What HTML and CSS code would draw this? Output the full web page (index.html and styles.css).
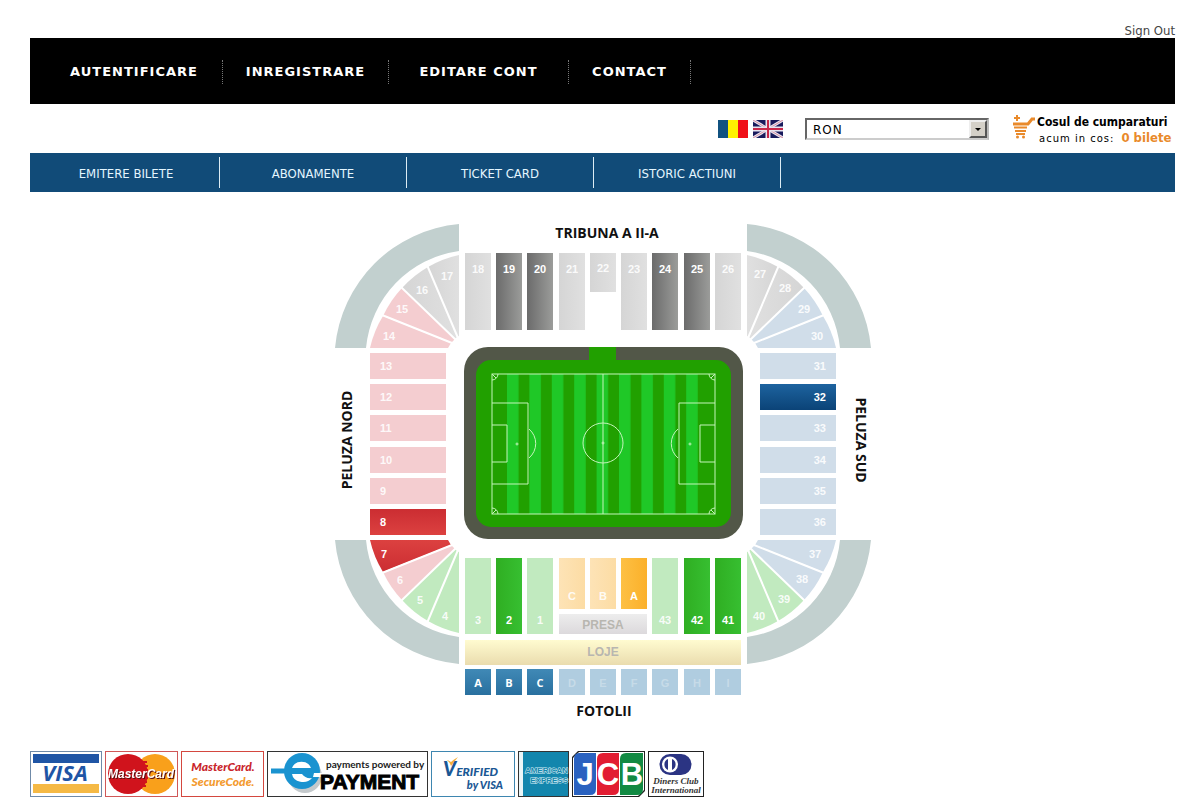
FILE: index.html
```html
<!DOCTYPE html>
<html lang="ro">
<head>
    <meta charset="UTF-8">
    <title>Bilete</title>
    <meta name="viewport" content="width=device-width, initial-scale=1.0">
    <link rel="stylesheet" href="styles.css">
</head>
<body>
    <div class="page">
        <div class="account-bar">
            <a href="#">Sign Out</a>
        </div>

        <nav class="main-nav">
            <a class="nav-first" href="#">AUTENTIFICARE</a>
            <a class="nav-medium" href="#">INREGISTRARE</a>
            <a class="nav-wide" href="#">EDITARE CONT</a>
            <a class="nav-small" href="#">CONTACT</a>
        </nav>

        <div class="tools">
            <div class="languages">
                <a href="#" aria-label="Romana">
                    <svg width="30" height="18" viewBox="0 0 30 18">
                        <rect width="10" height="18" fill="#115280"/>
                        <rect x="10" width="10" height="18" fill="#fff200"/>
                        <rect x="20" width="10" height="18" fill="#f01018"/>
                    </svg>
                </a>
                <a href="#" aria-label="English">
                    <svg width="30" height="18" viewBox="0 0 30 18">
                        <rect width="30" height="18" fill="#191a5c"/>
                        <path d="M0 0L30 18M30 0L0 18" stroke="#e8e4f0" stroke-width="3"/>
                        <path d="M0 0L30 18M30 0L0 18" stroke="#c73a55" stroke-width="0.500"/>
                        <path d="M15 0V18M0 9H30" stroke="#e8e4f0" stroke-width="5"/>
                        <path d="M15 0V18M0 9H30" stroke="#c8284a" stroke-width="2"/>
                    </svg>
                </a>
            </div>
            <div class="currency">
                <select aria-label="Moneda">
                    <option>RON</option>
                    <option>EUR</option>
                </select>
                <span class="currency-arrow"></span>
            </div>
            <a class="cart" href="#">
                <svg width="24" height="24" viewBox="0 0 24 24">
                    <path d="M5 0V6M2 3H8" stroke="#e98a2b" stroke-width="2"/>
                    <path d="M23 4H20L16 9H1" fill="none" stroke="#e98a2b" stroke-width="3"/>
                    <path d="M2 12.500H15M3 16H14M4 19H13" stroke="#e98a2b" stroke-width="2"/>
                    <circle cx="5.500" cy="22" r="1.500" fill="#e98a2b"/>
                    <circle cx="11.500" cy="22" r="1.500" fill="#e98a2b"/>
                </svg>
                <span class="cart-text">
                    <strong>Cosul de cumparaturi</strong>
                    <span class="cart-line"><span class="cart-label">acum in cos:</span><b>0 bilete</b></span>
                </span>
            </a>
        </div>

        <nav class="sub-nav">
            <a href="#">EMITERE BILETE</a>
            <a href="#">ABONAMENTE</a>
            <a href="#">TICKET CARD</a>
            <a href="#">ISTORIC ACTIUNI</a>
        </nav>

        <main class="stadium">
            <svg class="map" width="536" height="496" viewBox="0 0 536 496">
                <defs>
                    <linearGradient id="darkGray"><stop offset="0" stop-color="#6b6b6b"/><stop offset="1" stop-color="#9b9c9a"/></linearGradient>
                    <linearGradient id="lightGray"><stop offset="0" stop-color="#d5d5d5"/><stop offset="1" stop-color="#e0e0e0"/></linearGradient>
                    <linearGradient id="green"><stop offset="0" stop-color="#2fae22"/><stop offset="1" stop-color="#37bf31"/></linearGradient>
                    <linearGradient id="gold"><stop offset="0" stop-color="#fdc044"/><stop offset="1" stop-color="#fbb02a"/></linearGradient>
                    <linearGradient id="lightGold"><stop offset="0" stop-color="#fde3b6"/><stop offset="1" stop-color="#fcdca4"/></linearGradient>
                    <linearGradient id="red" x2="0" y2="1"><stop offset="0" stop-color="#cb2d32"/><stop offset="1" stop-color="#dc4140"/></linearGradient>
                    <linearGradient id="blue" x2="0" y2="1"><stop offset="0" stop-color="#1d639f"/><stop offset="1" stop-color="#0b4377"/></linearGradient>
                    <linearGradient id="seat" x2="0" y2="1"><stop offset="0" stop-color="#4089b6"/><stop offset="1" stop-color="#29709f"/></linearGradient>
                    <linearGradient id="lodge" x2="0" y2="1"><stop offset="0" stop-color="#fffbd0"/><stop offset="1" stop-color="#eadcae"/></linearGradient>
                    <linearGradient id="press" x2="0" y2="1"><stop offset="0" stop-color="#ededed"/><stop offset="1" stop-color="#dcd9dc"/></linearGradient>
                    <pattern id="grass" x="172" width="22.400" height="142" patternUnits="userSpaceOnUse">
                        <rect width="22.400" height="142" fill="#21a000"/>
                        <rect width="11.500" height="142" fill="#1fc827"/>
                    </pattern>
                    <path id="ring" d="M0 124A137 137 0 0 1 124 0V27A108 108 0 0 0 31 124Z"/>
                    <path id="wedgeA" d="M35 124A106 106 0 0 1 48 92L116 119L113 124Z"/>
                    <path id="wedgeB" d="M48 92A106 106 0 0 1 67 64L120 115L116 119Z"/>
                    <path id="wedgeC" d="M67 64A106 106 0 0 1 93 43L122 113L120 115Z"/>
                    <path id="wedgeD" d="M93 43A106 106 0 0 1 124 31V112L122 113Z"/>
                    <path id="gaps" d="M47 91L117 119M66 63L121 116M92 41L123 114"/>
                    <g id="half">
                        <path d="M157 179H193V260H157M157 201H172V238H157M194 205A19 19 0 0 1 194 234M157 156A6 6 0 0 0 163 150M157 284A6 6 0 0 1 163 290M157 150L161 154M157 290L161 286"/>
                        <circle cx="182" cy="220" r="1"/>
                    </g>
                </defs>

                <!-- corners -->
                <g>
                    <use href="#ring" class="ring"/>
                    <use href="#wedgeA" class="pink"/>
                    <use href="#wedgeB" class="pink"/>
                    <use href="#wedgeC" class="gray"/>
                    <use href="#wedgeD" class="gray"/>
                    <use href="#gaps" class="gap"/>
                </g>
                <g transform="matrix(-1 0 0 1 536 0)">
                    <use href="#ring" class="ring"/>
                    <use href="#wedgeA" class="sky"/>
                    <use href="#wedgeB" class="sky"/>
                    <use href="#wedgeC" class="gray"/>
                    <use href="#wedgeD" class="gray"/>
                    <use href="#gaps" class="gap"/>
                </g>
                <g transform="matrix(1 0 0 -1 0 440)">
                    <use href="#ring" class="ring"/>
                    <use href="#wedgeA" class="red"/>
                    <use href="#wedgeB" class="pink"/>
                    <use href="#wedgeC" class="mint"/>
                    <use href="#wedgeD" class="mint"/>
                    <use href="#gaps" class="gap"/>
                </g>
                <g transform="matrix(-1 0 0 -1 536 440)">
                    <use href="#ring" class="ring"/>
                    <use href="#wedgeA" class="sky"/>
                    <use href="#wedgeB" class="sky"/>
                    <use href="#wedgeC" class="mint"/>
                    <use href="#wedgeD" class="mint"/>
                    <use href="#gaps" class="gap"/>
                </g>
                <g class="num off">
                    <text x="54" y="116">14</text><text x="67" y="89">15</text><text x="87" y="70">16</text><text x="112" y="56">17</text>
                    <text x="425" y="54">27</text><text x="450" y="68">28</text><text x="469" y="89">29</text><text x="482" y="116">30</text>
                    <text x="65" y="360">6</text><text x="85" y="380">5</text><text x="110" y="396">4</text>
                    <text x="480" y="334">37</text><text x="467" y="359">38</text><text x="449" y="379">39</text><text x="424" y="396">40</text>
                </g>
                <text class="num" x="49" y="334">7</text>

                <!-- tribuna II -->
                <g class="gray">
                    <rect x="130" y="29" width="26" height="77"/>
                    <rect x="224" y="29" width="26" height="77"/>
                    <rect x="255" y="29" width="26" height="39"/>
                    <rect x="286" y="29" width="26" height="77"/>
                    <rect x="380" y="29" width="26" height="77"/>
                </g>
                <g class="dark">
                    <rect x="161" y="29" width="26" height="77"/>
                    <rect x="192" y="29" width="26" height="77"/>
                    <rect x="317" y="29" width="26" height="77"/>
                    <rect x="349" y="29" width="26" height="77"/>
                </g>
                <g class="num off">
                    <text x="143" y="49">18</text><text x="237" y="49">21</text><text x="268" y="48">22</text><text x="299" y="49">23</text><text x="393" y="49">26</text>
                </g>
                <g class="num">
                    <text x="174" y="49">19</text><text x="205" y="49">20</text><text x="330" y="49">24</text><text x="362" y="49">25</text>
                </g>

                <!-- peluza nord -->
                <g class="pink">
                    <rect x="35" y="129" width="76" height="26"/>
                    <rect x="35" y="160" width="76" height="26"/>
                    <rect x="35" y="191" width="76" height="26"/>
                    <rect x="35" y="223" width="76" height="26"/>
                    <rect x="35" y="254" width="76" height="26"/>
                </g>
                <rect class="red" x="35" y="285" width="76" height="26"/>
                <g class="num left off">
                    <text x="45" y="146">13</text><text x="45" y="177">12</text><text x="45" y="208">11</text><text x="45" y="240">10</text><text x="45" y="271">9</text>
                </g>
                <text class="num left" x="45" y="302">8</text>

                <!-- peluza sud -->
                <g class="sky">
                    <rect x="425" y="129" width="76" height="26"/>
                    <rect x="425" y="191" width="76" height="26"/>
                    <rect x="425" y="223" width="76" height="26"/>
                    <rect x="425" y="254" width="76" height="26"/>
                    <rect x="425" y="285" width="76" height="26"/>
                </g>
                <rect class="blue" x="425" y="160" width="76" height="26"/>
                <g class="num right off">
                    <text x="491" y="146">31</text><text x="491" y="208">33</text><text x="491" y="240">34</text><text x="491" y="271">35</text><text x="491" y="302">36</text>
                </g>
                <text class="num right" x="491" y="177">32</text>

                <!-- tribuna I -->
                <g class="mint">
                    <rect x="130" y="334" width="26" height="76"/>
                    <rect x="192" y="334" width="26" height="76"/>
                    <rect x="317" y="334" width="26" height="76"/>
                </g>
                <g class="green">
                    <rect x="161" y="334" width="26" height="76"/>
                    <rect x="349" y="334" width="26" height="76"/>
                    <rect x="380" y="334" width="26" height="76"/>
                </g>
                <g class="cream">
                    <rect x="224" y="334" width="26" height="51"/>
                    <rect x="255" y="334" width="26" height="51"/>
                </g>
                <rect class="gold" x="286" y="334" width="26" height="51"/>
                <g class="num off">
                    <text x="143" y="400">3</text><text x="205" y="400">1</text><text x="330" y="400">43</text>
                    <text x="237" y="376">C</text><text x="268" y="376">B</text>
                </g>
                <g class="num">
                    <text x="174" y="400">2</text><text x="362" y="400">42</text><text x="393" y="400">41</text><text x="299" y="376">A</text>
                </g>
                <rect x="224" y="390" width="88" height="20" fill="url(#press)"/>
                <text class="area" x="268" y="405">PRESA</text>
                <rect x="130" y="416" width="276" height="25" fill="url(#lodge)"/>
                <text class="area" x="268" y="432">LOJE</text>

                <!-- fotolii -->
                <g class="seat">
                    <rect x="130" y="445" width="26" height="26"/>
                    <rect x="161" y="445" width="26" height="26"/>
                    <rect x="192" y="445" width="26" height="26"/>
                </g>
                <g class="seat-off">
                    <rect x="224" y="445" width="26" height="26"/>
                    <rect x="255" y="445" width="26" height="26"/>
                    <rect x="286" y="445" width="26" height="26"/>
                    <rect x="317" y="445" width="26" height="26"/>
                    <rect x="349" y="445" width="26" height="26"/>
                    <rect x="380" y="445" width="26" height="26"/>
                </g>
                <g class="num letters">
                    <text x="143" y="463">A</text><text x="174" y="463">B</text><text x="205" y="463">C</text>
                </g>
                <g class="num faint">
                    <text x="237" y="463">D</text><text x="268" y="463">E</text><text x="299" y="463">F</text><text x="330" y="463">G</text><text x="362" y="463">H</text><text x="393" y="463">I</text>
                </g>

                <!-- pitch -->
                <rect x="129" y="123" width="279" height="192" rx="24" fill="#525748"/>
                <rect x="141" y="136" width="255" height="167" rx="15" fill="#21a000"/>
                <rect x="254" y="123" width="27" height="14" fill="#21a000"/>
                <rect x="172" y="150" width="192" height="140" fill="url(#grass)"/>
                <g class="lines">
                    <rect x="157" y="150" width="223" height="140"/>
                    <path d="M268 150V290"/>
                    <circle cx="268" cy="219" r="20"/>
                    <circle cx="268" cy="219" r="1"/>
                    <use href="#half"/>
                    <use href="#half" transform="matrix(-1 0 0 1 537 0)"/>
                </g>

                <g class="stand-name">
                    <text x="272" y="14">TRIBUNA A II-A</text>
                    <text x="269" y="492">FOTOLII</text>
                    <text transform="translate(17 216) rotate(-90)">PELUZA NORD</text>
                    <text transform="translate(521 216) rotate(90)">PELUZA SUD</text>
                </g>
            </svg>
        </main>

        <footer class="payments">
            <svg width="72" height="46" viewBox="0 0 72 46">
                <rect x="0.500" y="0.500" width="71" height="45" fill="#fff" stroke="#6f8aa8"/>
                <rect x="3" y="3" width="66" height="9" fill="#1f55a5"/>
                <rect x="3" y="33" width="66" height="9" fill="#f5b945"/>
                <text x="35" y="30" class="visa">VISA</text>
            </svg>
            <svg width="73" height="46" viewBox="0 0 73 46">
                <rect x="0.500" y="0.500" width="72" height="45" fill="#fff" stroke="#d05858"/>
                <circle cx="50" cy="23" r="20" fill="#f9a01b"/>
                <circle cx="23" cy="23" r="20" fill="#d0131c"/>
                <path d="M33 11H42M32 15H43M31 19H43M31 27H43M32 31H42M34 35H41" stroke="#d0131c" stroke-width="2"/>
                <text x="36" y="27" class="mastercard">MasterCard</text>
            </svg>
            <svg width="83" height="46" viewBox="0 0 83 46">
                <rect x="0.500" y="0.500" width="82" height="45" fill="#fff" stroke="#d4473f"/>
                <text x="42" y="20" class="secure" fill="#c9252b">MasterCard.</text>
                <text x="42" y="35" class="secure" fill="#f39a2e">SecureCode.</text>
            </svg>
            <svg width="161" height="46" viewBox="0 0 161 46">
                <rect x="0.500" y="0.500" width="160" height="45" fill="#fff" stroke="#333"/>
                <ellipse cx="38" cy="25" rx="17" ry="17" fill="#c4c9cc"/>
                <circle cx="35" cy="20" r="18" fill="#1a93d0"/>
                <path d="M4 20H45" stroke="#1a93d0" stroke-width="5"/>
                <path d="M25 17A10 9 0 0 1 44 17ZM25 23H35A10 9 0 0 0 45 27A11 9 0 0 1 25 23Z" fill="#fff"/>
                <path d="M47 22H55V26H46Z" fill="#fff"/>
                <text x="59" y="17" class="powered">payments powered by</text>
                <text x="53" y="38" class="epayment">PAYMENT</text>
            </svg>
            <svg width="84" height="46" viewBox="0 0 84 46">
                <rect x="0.500" y="0.500" width="83" height="45" fill="#fff" stroke="#3e86b0"/>
                <path d="M14 9Q18 9 20 15L27 6Q22 9 20 11Q18 9 14 9Z" fill="#f5b13b"/>
                <text x="12" y="25" class="verified"><tspan class="verified-v">V</tspan>ERIFIED</text>
                <text x="72" y="38" class="by-visa">by VISA</text>
            </svg>
            <svg width="51" height="46" viewBox="0 0 51 46">
                <rect x="0.500" y="0.500" width="50" height="45" fill="#1386ad" stroke="#333"/>
                <rect x="1" y="1" width="4" height="44" fill="#eaf5f8"/>
                <text x="50" y="22" class="amex">AMERICAN</text>
                <text x="50" y="32" class="amex">EXPRESS</text>
            </svg>
            <svg width="73" height="46" viewBox="0 0 73 46">
                <path d="M6 0H73V40L67 46H0V6Z" fill="#222"/>
                <path d="M7 1H72V39L66 45H1V7Z" fill="#fff"/>
                <path d="M7 2H24V38Q24 44 18 44H2V8Q2 2 7 2Z" fill="#2a62c0"/>
                <path d="M31 2H47V38Q47 44 41 44H25V8Q25 2 31 2Z" fill="#e21d32"/>
                <path d="M54 2H71V38Q71 44 65 44H48V8Q48 2 54 2Z" fill="#128a43"/>
                <text x="13" y="34" class="jcb">J</text>
                <text x="36" y="34" class="jcb">C</text>
                <text x="60" y="34" class="jcb">B</text>
            </svg>
            <svg width="56" height="46" viewBox="0 0 56 46">
                <rect x="0.500" y="0.500" width="55" height="45" fill="#fff" stroke="#222"/>
                <path d="M22 3H33A10 10 0 0 1 33 24H22A10 10 0 0 1 22 3Z" fill="#2b3483"/>
                <circle cx="22" cy="13.500" r="8" fill="#fff"/>
                <path d="M20 8A6 6 0 0 0 20 19ZM24 8A6 6 0 0 1 24 19Z" fill="#2b3483"/>
                <text x="28" y="33" class="diners">Diners Club</text>
                <text x="28" y="42" class="diners">International</text>
            </svg>
        </footer>
    </div>
</body>
</html>
```
FILE: styles.css
```css
* {
    box-sizing: border-box;
}

body {
    margin: 0;
    background-color: #fff;
    color: #000;
    font-family: "DejaVu Sans Condensed", "DejaVu Sans", Tahoma, sans-serif;
    font-size: 13px;
}

a {
    color: inherit;
    text-decoration: none;
}

svg {
    display: block;
}

.page {
    padding: 22px 25px 6px 30px;
}

.account-bar {
    display: flex;
    justify-content: flex-end;
    height: 16px;
    line-height: 18px;
    color: #444;
}

.main-nav {
    display: flex;
    align-items: center;
    height: 66px;
    padding: 2px 0 0 16px;
    background-color: #000;
    color: #fff;
    font-family: "DejaVu Sans", Verdana, sans-serif;
    font-weight: bold;
    letter-spacing: 1px;
}

.main-nav a {
    border-right: 1px dotted #777;
    line-height: 24px;
    text-align: center;
}

.nav-first {
    width: 177px;
}

.nav-medium {
    width: 166px;
}

.nav-wide {
    width: 180px;
}

.nav-small {
    width: 122px;
}

.tools {
    display: flex;
    justify-content: flex-end;
    align-items: center;
    height: 49px;
}

.languages {
    display: flex;
    gap: 5px;
    margin-right: 22px;
}

.currency {
    position: relative;
    margin-right: 23px;
}

.currency select {
    display: block;
    appearance: none;
    width: 184px;
    height: 22px;
    padding: 2px 6px 0;
    border: 2px solid;
    border-color: #666 #bbb #ccc #666;
    border-radius: 0;
    background-color: #fff;
    color: #000;
    font-family: "DejaVu Sans", Verdana, sans-serif;
    font-size: 12px;
    letter-spacing: 1px;
}

.currency-arrow {
    position: absolute;
    top: 2px;
    right: 2px;
    width: 18px;
    height: 18px;
    border: 2px solid;
    border-color: #eee #555 #555 #eee;
    background-color: #d4d0c8;
    pointer-events: none;
}

.currency-arrow::after {
    content: "";
    position: absolute;
    top: 6px;
    left: 4px;
    border: 3px solid transparent;
    border-top-color: #000;
}

.cart {
    display: flex;
    gap: 1px;
    width: 163px;
    padding-top: 4px;
}

.cart-text {
    display: flex;
    flex-direction: column;
    line-height: 15px;
    white-space: nowrap;
}

.cart-line {
    display: flex;
    align-items: baseline;
    gap: 7px;
    padding-left: 2px;
}

.cart-label {
    font-family: "DejaVu Sans", Verdana, sans-serif;
    font-size: 10px;
    letter-spacing: 1px;
}

.cart-text strong {
    font-size: 12px;
}

.cart-text b {
    color: #e98a2b;
    font-size: 13px;
}

.sub-nav {
    display: flex;
    align-items: center;
    height: 39px;
    padding-left: 3px;
    background-color: #114b78;
    color: #e4f6ff;
}

.sub-nav a {
    width: 187px;
    padding-top: 2px;
    border-right: 1px solid #dcecf4;
    line-height: 29px;
    text-align: center;
}

.stadium {
    display: flex;
    justify-content: center;
    padding: 32px 0 31px;
}

.ring {
    fill: #c2d0cf;
}

.gap {
    fill: none;
    stroke: #fff;
    stroke-width: 2px;
}

.gray {
    fill: url(#lightGray);
}

.dark {
    fill: url(#darkGray);
}

.pink {
    fill: #f4cdd0;
}

.red {
    fill: url(#red);
}

.sky {
    fill: #d0dde9;
}

.blue {
    fill: url(#blue);
}

.mint {
    fill: #c1eabf;
}

.green {
    fill: url(#green);
}

.cream {
    fill: url(#lightGold);
}

.gold {
    fill: url(#gold);
}

.seat {
    fill: url(#seat);
}

.seat-off {
    fill: #b0cde0;
}

.num {
    fill: #fff;
    font-family: "Liberation Sans", Arial, sans-serif;
    font-size: 11px;
    font-weight: bold;
    text-anchor: middle;
}

.left {
    text-anchor: start;
}

.right {
    text-anchor: end;
}

.off {
    fill-opacity: 0.9;
}

.faint {
    fill-opacity: 0.3;
}

.letters {
    font-family: "Open Sans", sans-serif;
}

.area {
    fill: #b8b6b0;
    font-family: "Liberation Sans", Arial, sans-serif;
    font-size: 12px;
    font-weight: bold;
    text-anchor: middle;
}

.lines {
    fill: none;
    stroke: #c4f5ba;
}

.stand-name {
    fill: #111;
    font-family: "Open Sans", "Noto Sans", sans-serif;
    font-size: 14px;
    font-weight: bold;
    text-anchor: middle;
}

.payments {
    display: flex;
    flex-wrap: wrap;
    gap: 3px;
}

.visa {
    fill: #1f55a5;
    font: italic bold 22px "Open Sans", sans-serif;
    text-anchor: middle;
}

.mastercard {
    fill: #fff;
    font: italic bold 12px "Liberation Sans", sans-serif;
    text-anchor: middle;
    filter: drop-shadow(1px 1px 0 #5a1010);
}

.secure {
    font: italic 900 12px Lato, sans-serif;
    text-anchor: middle;
}

.powered {
    fill: #222;
    font: bold 10px Lato, sans-serif;
}

.epayment {
    fill: #000;
    stroke: #000;
    stroke-width: 1px;
    font: 900 21px "Liberation Sans", sans-serif;
}

.verified {
    fill: #1a5794;
    font: italic 900 12px Lato, sans-serif;
}

.verified-v {
    font-size: 20px;
}

.by-visa {
    fill: #1a5794;
    font: italic 900 11px Lato, sans-serif;
    text-anchor: end;
}

.amex {
    fill: #1386ad;
    stroke: #d8f0f6;
    stroke-width: 1px;
    paint-order: stroke;
    font: bold 8px "Liberation Sans", sans-serif;
    text-anchor: end;
}

.jcb {
    fill: #fff;
    font: bold 31px "Liberation Sans", sans-serif;
    text-anchor: middle;
}

.diners {
    fill: #333;
    font: italic bold 9px "Liberation Serif", serif;
    text-anchor: middle;
}
```
